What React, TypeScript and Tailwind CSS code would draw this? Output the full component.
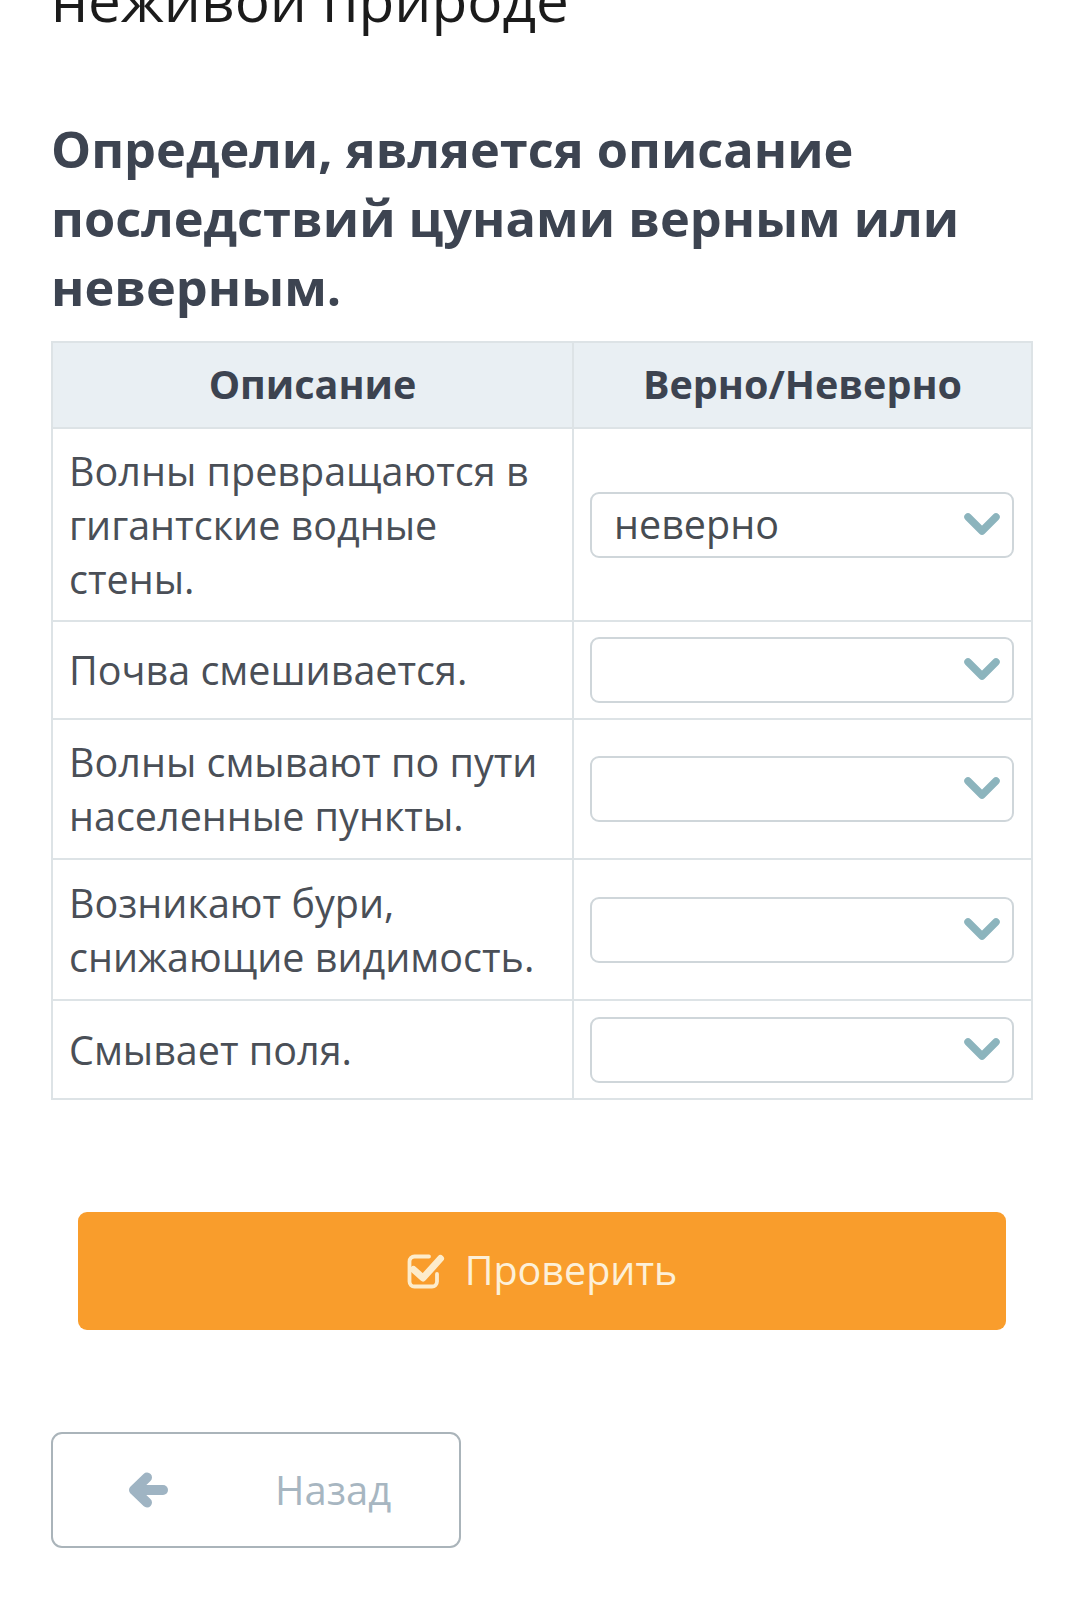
const rows = [
  { text: 'Волны превращаются в гигантские водные стены.', value: 'неверно', h: 'h-[193px]' },
  { text: 'Почва смешивается.', value: '', h: 'h-[98px]' },
  { text: 'Волны смывают по пути населенные пункты.', value: '', h: 'h-[140px]' },
  { text: 'Возникают бури, снижающие видимость.', value: '', h: 'h-[141px]' },
  { text: 'Смывает поля.', value: '', h: 'h-[99px]' },
]

function CheckSquare() {
  return (
    <svg width="38" height="35" viewBox="0 0 38 35" fill="none" className="mr-[20px]">
      <path
        d="M22 2.5 H7.5 A5 5 0 0 0 2.5 7.5 V27.5 A5 5 0 0 0 7.5 32.5 H25 A5 5 0 0 0 30 27.5 V20"
        stroke="#fdeccb"
        strokeWidth="3.8"
        strokeLinecap="round"
      />
      <path d="M6.5 15.5 L16 24 L33.5 4.5" stroke="#fdeccb" strokeWidth="7" strokeLinecap="round" strokeLinejoin="round" />
    </svg>
  )
}

function Chevron() {
  return (
    <svg width="38" height="26" viewBox="0 0 38 26" fill="none">
      <path d="M5 5 L19 19 L33 5" stroke="#8cb4bd" strokeWidth="7.5" strokeLinecap="round" strokeLinejoin="round" />
    </svg>
  )
}

function ArrowLeft() {
  return (
    <svg width="42" height="36" viewBox="0 0 42 36" fill="none">
      <path d="M9 18 H36" stroke="#9fb4c3" strokeWidth="10" strokeLinecap="round" />
      <path d="M20 5.5 L7 18 L20 30.5" stroke="#9fb4c3" strokeWidth="10" strokeLinecap="round" strokeLinejoin="round" />
    </svg>
  )
}

export default function App() {
  return (
    <div className="min-h-[1619px] overflow-hidden bg-white pl-[51px]" style={{ fontFamily: '"Open Sans", "Noto Sans", sans-serif' }}>
      <div className="mt-[-41px] text-[58.5px] leading-[80px] text-[#1b1b1b]">неживой природе</div>

      <h1 className="mt-[75px] w-[980px] text-[50.5px] font-bold leading-[69px] text-[#3d4451]">
        Определи, является описание последствий цунами верным или неверным.
      </h1>

      {/* Table */}
      <table className="mt-[20px] w-[980px] table-fixed border-collapse">
        <colgroup>
          <col className="w-[521px]" />
          <col className="w-[459px]" />
        </colgroup>
        <thead>
          <tr className="h-[86px] bg-[#e9eff3]">
            <th className="border-2 border-[#dde3e6] text-[39.5px] font-bold text-[#3c4350]">Описание</th>
            <th className="border-2 border-[#dde3e6] text-[39.5px] font-bold text-[#3c4350]">Верно/Неверно</th>
          </tr>
        </thead>
        <tbody>
          {rows.map((r) => (
            <tr key={r.text} className={r.h}>
              <td className="border-2 border-[#dde3e6] py-[14px] pl-[16px] pr-[16px] align-middle text-[39.5px] leading-[54px] text-[#4a4f57]">
                {r.text}
              </td>
              <td className="border-2 border-[#dde3e6] py-[14px] pl-[16px] pr-[17px] align-middle">
                <div className="flex h-[66px] items-center justify-between rounded-[9px] border-2 border-[#cfd6da] pl-[22px] pr-[11px]">
                  <span className="text-[39.5px] text-[#474c52]">{r.value}</span>
                  <Chevron />
                </div>
              </td>
            </tr>
          ))}
        </tbody>
      </table>

      {/* Check button */}
      <button className="ml-[27px] mt-[112px] flex h-[118px] w-[928px] items-center justify-center rounded-[9px] bg-[#f99d2c] text-[39.5px] text-[#fdf0d8]">
        <CheckSquare />
        Проверить
      </button>

      {/* Back button */}
      <button className="mt-[102px] flex h-[116px] w-[410px] items-center rounded-[11px] border-2 border-[#aab4ba] bg-white pl-[74px] text-[40px] text-[#a7b6c1]">
        <ArrowLeft />
        <span className="ml-[106px]">Назад</span>
      </button>
    </div>
  )
}
